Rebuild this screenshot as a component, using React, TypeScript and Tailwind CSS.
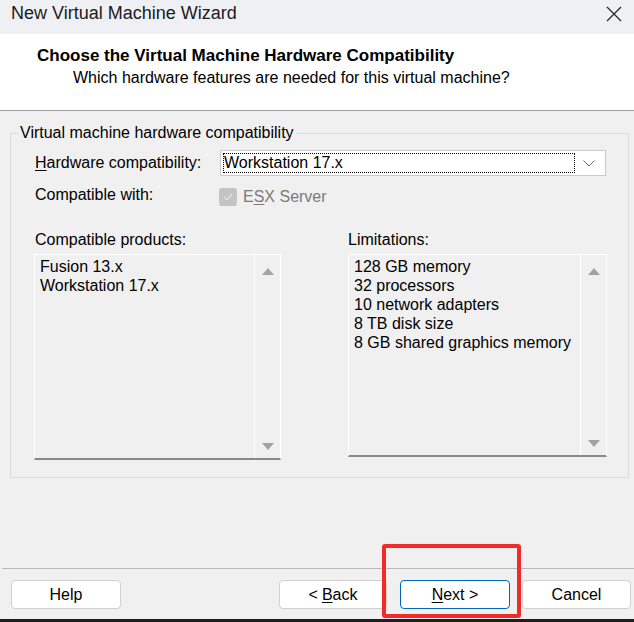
import React from 'react';

const font = { fontFamily: '"Liberation Sans", Arial, sans-serif' };

function Btn({ children, focus, className }: { children: React.ReactNode; focus?: boolean; className?: string }) {
  return (
    <button
      className={
        'h-[29px] rounded-[4px] bg-white text-[16px] text-black flex items-center justify-center border ' +
        (focus ? 'border-[#0067c0] ' : 'border-[#d0d0d0] ') +
        (className ?? '')
      }
    >
      {children}
    </button>
  );
}

function Arrow({ up }: { up?: boolean }) {
  return (
    <svg width="12" height="7" viewBox="0 0 12 7" className="block">
      {up ? <path d="M6 0 L12 7 L0 7 Z" fill="#a3a3a3" /> : <path d="M0 0 L12 0 L6 7 Z" fill="#a3a3a3" />}
    </svg>
  );
}

function ListBox({ items, w, h }: { items: string[]; w: string; h: string }) {
  return (
    <div className={`${w} ${h} flex bg-[#f0f0f0] border-t border-l border-r border-[#ffffff] border-b-2 border-b-[#8a8a8a]`}>
      <div className="flex-1 pl-[5px] pt-[2px] text-[16px] leading-[19px] text-black">
        {items.map((t) => (
          <div key={t}>{t}</div>
        ))}
      </div>
      <div className="w-[26px] border-l border-[#ffffff] flex flex-col items-center justify-between pt-[13px] pb-[8px]">
        <Arrow up />
        <Arrow />
      </div>
    </div>
  );
}

export default function App() {
  return (
    <div className="w-[634px] h-[622px] bg-[#f0f0f0] flex flex-col relative overflow-hidden" style={font}>
      {/* title bar */}
      <div className="h-[34px] bg-[#eff0f4] flex items-center justify-between pl-[11px] pr-[12px]">
        <span className="text-[18px] text-[#1b1b1b] -mt-[7px]">New Virtual Machine Wizard</span>
        <svg width="16" height="16" viewBox="0 0 16 16" className="-mt-[7px]">
          <path d="M1 1 L15 15 M15 1 L1 15" stroke="#222" strokeWidth="1.2" />
        </svg>
      </div>

      {/* header */}
      <div className="h-[77px] bg-white border-b border-[#a0a0a0] pt-[11px]">
        <div className="pl-[37px] text-[17px] font-bold leading-[21px] text-black">
          Choose the Virtual Machine Hardware Compatibility
        </div>
        <div className="pl-[73px] text-[16px] leading-[20px] mt-[2px] text-black">
          Which hardware features are needed for this virtual machine?
        </div>
      </div>

      {/* group box */}
      <div className="relative mt-[22px] ml-[10px] w-[619px] h-[345px] border border-[#dcdcdc] pt-[16px]">
        <span className="absolute -top-[11px] left-[7px] px-[2px] bg-[#f0f0f0] text-[16px] leading-[20px] text-black">
          Virtual machine hardware compatibility
        </span>

        <div className="flex items-center pl-[24px] h-[26px]">
          <span className="w-[185px] text-[16px] text-black">
            <span className="underline underline-offset-2">H</span>ardware compatibility:
          </span>
          <div className="w-[386px] h-[26px] bg-white border border-[#cacaca] flex items-center p-[2px]">
            <div className="flex-1 h-full border border-dotted border-black flex items-center text-[16px] text-black">
              Workstation 17.x
            </div>
            <div className="w-[28px] flex items-center justify-center">
              <svg width="12" height="7" viewBox="0 0 12 7">
                <path d="M0.5 0.5 L6 6 L11.5 0.5" stroke="#6a6a6a" strokeWidth="1" fill="none" />
              </svg>
            </div>
          </div>
        </div>

        <div className="flex items-center pl-[24px] mt-[11px] h-[19px]">
          <span className="w-[184px] text-[16px] text-black -mt-[4px]">Compatible with:</span>
          <div className="w-[18px] h-[18px] rounded-[3px] bg-[#c4c4c4] flex items-center justify-center">
            <svg width="10" height="8" viewBox="0 0 10 8">
              <path d="M1 4 L4 7 L9 1" stroke="#f4f4f4" strokeWidth="1" fill="none" />
            </svg>
          </div>
          <span className="ml-[6px] text-[16px] text-[#7a7a7a]">
            E<span className="underline underline-offset-2">S</span>X Server
          </span>
        </div>

        <div className="flex pl-[24px] mt-[24px] text-[16px] leading-[20px] text-black">
          <span className="w-[313px]">Compatible products:</span>
          <span>Limitations:</span>
        </div>

        <div className="flex items-start pl-[23px] mt-[4px]">
          <ListBox items={['Fusion 13.x', 'Workstation 17.x']} w="w-[247px]" h="h-[206px]" />
          <div className="w-[67px]" />
          <ListBox
            items={['128 GB memory', '32 processors', '10 network adapters', '8 TB disk size', '8 GB shared graphics memory']}
            w="w-[259px]"
            h="h-[203px]"
          />
        </div>
      </div>

      {/* footer */}
      <div className="mt-auto ml-[2px] border-t border-[#b9b9b9] pt-[11px] pb-[10px] flex">
        <Btn className="ml-[9px] w-[110px]">Help</Btn>
        <div className="flex-1" />
        <Btn className="w-[108px]">
          &lt; <span className="underline underline-offset-2 ml-[4px]">B</span>ack
        </Btn>
        <Btn focus className="ml-[13px] w-[110px]">
          <span className="underline underline-offset-2">N</span>ext &gt;
        </Btn>
        <Btn className="ml-[12px] w-[109px] mr-[3px]">Cancel</Btn>
      </div>
      <div className="h-[3px] bg-[#1e1e1e]" />

      {/* red highlight overlay */}
      <div className="absolute left-[382px] top-[544px] w-[139px] h-[74px] border-4 border-[#f22a2a] rounded-[3px] pointer-events-none" />
    </div>
  );
}
